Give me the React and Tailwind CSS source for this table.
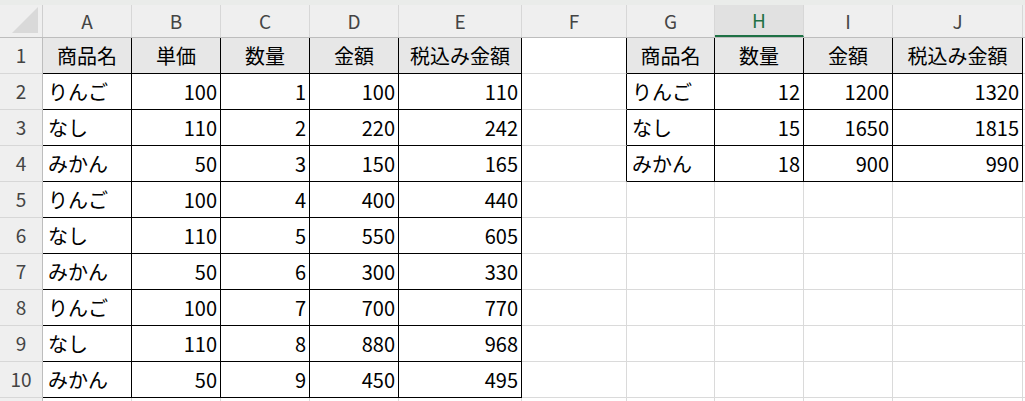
import React from 'react';

const colLetters = ['A', 'B', 'C', 'D', 'E', 'F', 'G', 'H', 'I', 'J', ''];
const colWidths = [89, 89, 89, 89, 123, 105, 88, 89, 89, 130, 120];

const left = [
  ['商品名', '単価', '数量', '金額', '税込み金額'],
  ['りんご', 100, 1, 100, 110],
  ['なし', 110, 2, 220, 242],
  ['みかん', 50, 3, 150, 165],
  ['りんご', 100, 4, 400, 440],
  ['なし', 110, 5, 550, 605],
  ['みかん', 50, 6, 300, 330],
  ['りんご', 100, 7, 700, 770],
  ['なし', 110, 8, 880, 968],
  ['みかん', 50, 9, 450, 495],
];

const right = [
  ['商品名', '数量', '金額', '税込み金額'],
  ['りんご', 12, 1200, 1320],
  ['なし', 15, 1650, 1815],
  ['みかん', 18, 900, 990],
];

// r: 1-based row, c: 0-based column (0 = A)
function inTable(r, c) {
  if (r >= 1 && r <= 10 && c >= 0 && c <= 4) return true;
  if (r >= 1 && r <= 4 && c >= 6 && c <= 9) return true;
  return false;
}

function valueAt(r, c) {
  if (r >= 1 && r <= 10 && c >= 0 && c <= 4) return left[r - 1][c];
  if (r >= 1 && r <= 4 && c >= 6 && c <= 9) return right[r - 1][c - 6];
  return null;
}

function Cell({ r, c }) {
  const v = valueAt(r, c);
  const t = inTable(r, c);
  const blackR = t || inTable(r, c + 1);
  const blackB = t || inTable(r + 1, c);
  const isHead = t && r === 1;
  const isNum = typeof v === 'number';
  return (
    <div
      className={
        'h-[36px] shrink-0 flex items-center border-r border-b overflow-hidden whitespace-nowrap ' +
        (blackR ? 'border-r-black ' : 'border-r-[#dadada] ') +
        (blackB ? 'border-b-black ' : 'border-b-[#dadada] ') +
        (isHead ? 'bg-[#e7e7e7] justify-center ' : 'bg-white ') +
        (isNum ? 'justify-end pr-[3px] ' : !isHead ? 'pl-[5px] ' : '')
      }
      style={{ width: colWidths[c] }}
    >
      {v}
    </div>
  );
}

export default function App() {
  const rows = [1, 2, 3, 4, 5, 6, 7, 8, 9, 10, 11];
  return (
    <div
      className="w-[1025px] h-[401px] overflow-hidden bg-white text-[20px] text-black"
      style={{ fontFamily: '"Noto Sans CJK JP", "Noto Sans", sans-serif' }}
    >
      <div className="h-[5px] bg-[#eaecea]" />
      <div className="flex h-[33px] bg-[#efefef] border-b border-b-[#bdbdbd]">
        <div className="w-[43px] shrink-0 border-r border-r-[#cfcfcf] relative">
          <svg className="absolute left-0 top-0" width="42" height="32" viewBox="0 0 42 32">
            <polygon points="12,28 38,28 38,2" fill="#d9d9d9" />
          </svg>
        </div>
        {colLetters.map((l, i) => (
          <div
            key={i}
            className={
              'shrink-0 flex items-center justify-center text-[19px] border-r border-r-[#d7d7d7] ' +
              (l === 'H'
                ? 'bg-[#e1e1e1] text-[#1e7145] border-b-2 border-b-[#1e7145]'
                : 'text-[#444]')
            }
            style={{ width: colWidths[i] }}
          >
            {l}
          </div>
        ))}
      </div>
      {rows.map((r) => (
        <div key={r} className="flex">
          <div className="w-[43px] h-[36px] shrink-0 flex items-center justify-center bg-[#efefef] text-[19px] text-[#444] border-r border-r-[#bdbdbd] border-b border-b-[#d7d7d7]">
            {r <= 10 ? r : ''}
          </div>
          {colWidths.map((_, c) => (
            <Cell key={c} r={r} c={c} />
          ))}
        </div>
      ))}
    </div>
  );
}
